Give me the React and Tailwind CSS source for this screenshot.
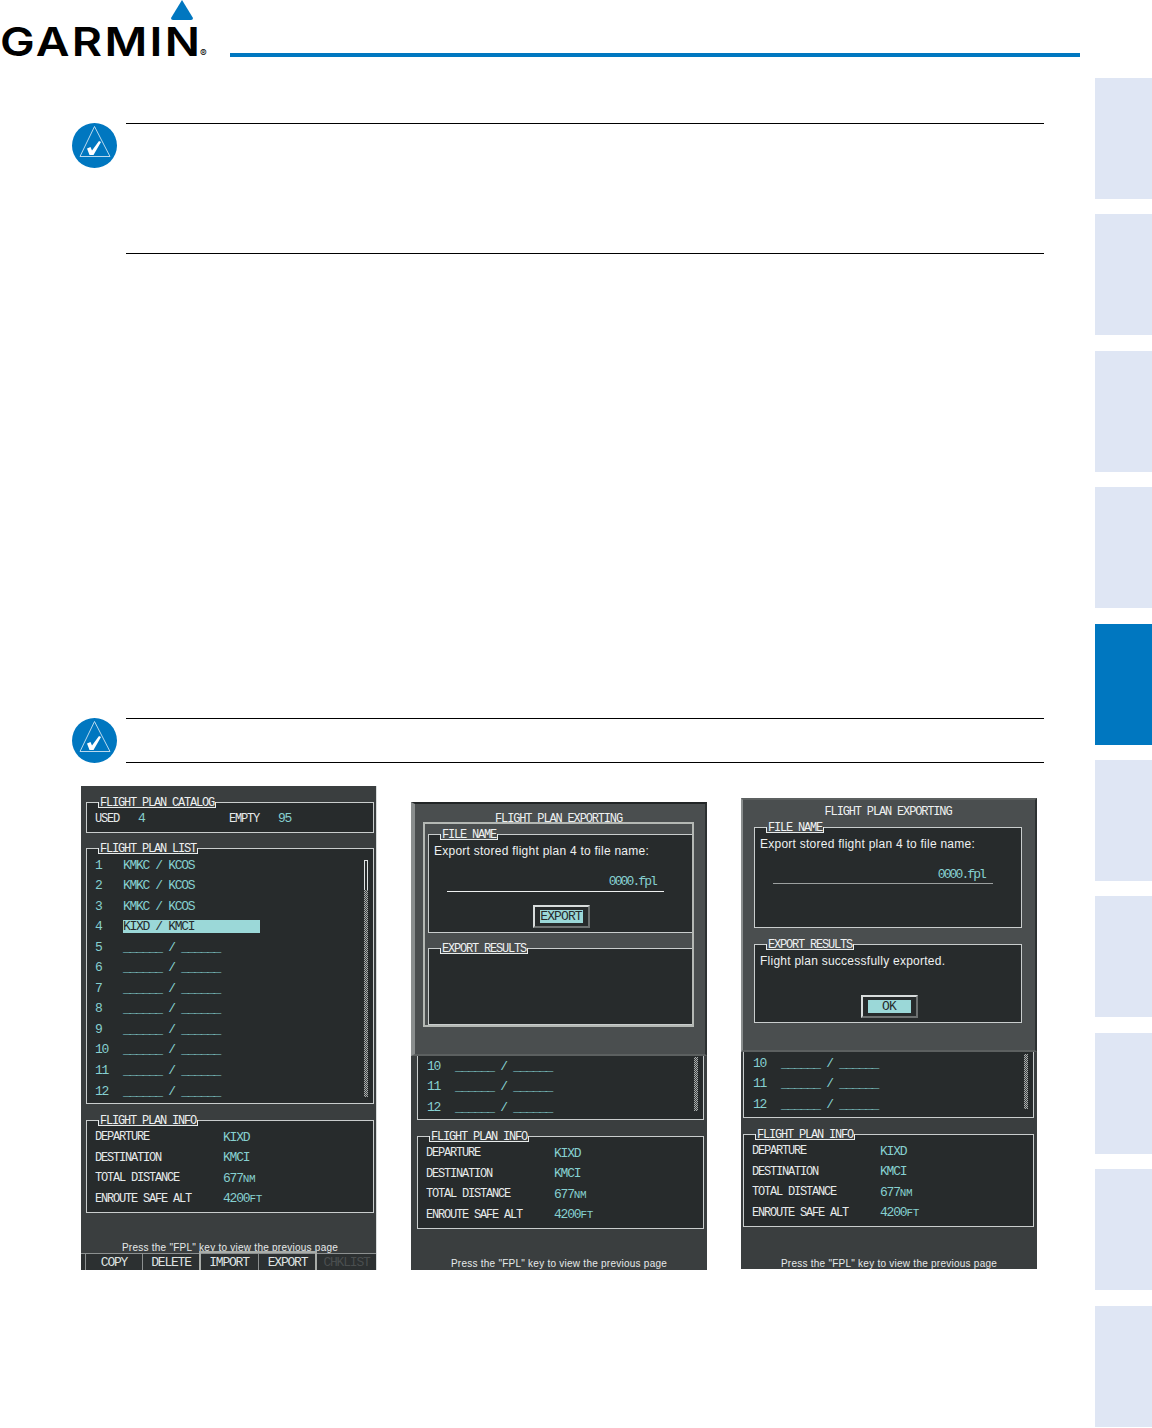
import React from "react";

const TABS = [false, false, false, false, true, false, false, false, false, false];

const ROUTES = [
  ["1", "KMKC / KCOS"],
  ["2", "KMKC / KCOS"],
  ["3", "KMKC / KCOS"],
  ["4", "KIXD / KMCI"],
  ["5", "______ / ______"],
  ["6", "______ / ______"],
  ["7", "______ / ______"],
  ["8", "______ / ______"],
  ["9", "______ / ______"],
  ["10", "______ / ______"],
  ["11", "______ / ______"],
  ["12", "______ / ______"],
];

const INFO = [
  ["DEPARTURE", "KIXD", ""],
  ["DESTINATION", "KMCI", ""],
  ["TOTAL DISTANCE", "677", "NM"],
  ["ENROUTE SAFE ALT", "4200", "FT"],
];

const NoteIcon = () => (
  <svg width="45" height="45" viewBox="0 0 45 45" className="shrink-0">
    <circle cx="22.5" cy="22.5" r="22.5" fill="#0077c0" />
    <path d="M22.5 3.5 L38 33.5 L8 33.5 Z" fill="none" stroke="#cfe4f3" strokeWidth="0.9" />
    <path d="M15 25.5 L18.5 24 L20 27.5 L27 18 L29 19 L21.5 32 L17.5 32 Z" fill="#ffffff" />
  </svg>
);

const Note = ({ height }) => (
  <div className="flex gap-[9px] pl-[72px]">
    <NoteIcon />
    <div className={`w-[918px] border-y border-black ${height}`}></div>
  </div>
);

const Box = ({ title, titleBg = "bg-[#3a3e3f]", className = "", children }) => (
  <div className={`relative border border-[#c9cdcd] bg-[#272b2c] ${className}`}>
    {title && (
      <div className={`absolute left-[11px] -top-px h-[6px] border-x border-b border-[#e8ecec] px-[1px] ${titleBg}`}>
        <div className="-mt-[4px] whitespace-nowrap text-[12px] leading-[11px] tracking-[-1.2px] text-[#eef1f1]">{title}</div>
      </div>
    )}
    {children}
  </div>
);

const RouteRow = ({ num, route, selected }) => (
  <div className="flex h-[20.55px] items-center text-[13px] tracking-[-1.33px] text-[#86d0d0]">
    <span className="w-[28px]">{num}</span>
    {selected ? (
      <span className="w-[137px] bg-[#9bd8d8] leading-[13px] text-[#272b2c]">{route}</span>
    ) : (
      <span>{route}</span>
    )}
  </div>
);

const ScrollTrack = ({ className, thumb }) => (
  <div className={`flex w-[4px] flex-col ${className}`}>
    {thumb && <div className="h-[30px] border-x border-t border-[#dfe3e3]"></div>}
    <div className="flex-1 bg-[repeating-conic-gradient(#a8acac_0_25%,#3a3e3f_0_50%)] bg-size-[2px_2px]"></div>
  </div>
);

const InfoBox = ({ className }) => (
  <Box title="FLIGHT PLAN INFO" className={`h-[93px] pl-[8px] pt-[6px] ${className}`}>
    {INFO.map(([label, value, unit]) => (
      <div key={label} className="flex h-[20.5px] items-center">
        <span className="w-[128px] text-[12px] tracking-[-1.2px] text-[#e6eaea]">{label}</span>
        <span className="text-[13px] tracking-[-1.2px] text-[#86d0d0]">
          {value}
          <span className="text-[11px] tracking-[-0.3px]">{unit}</span>
        </span>
      </div>
    ))}
  </Box>
);

const Footer = ({ className }) => (
  <div className={`text-center font-['Liberation_Sans',sans-serif] text-[10px] leading-[12px] tracking-[0.25px] whitespace-nowrap text-[#e6eaea] ${className}`}>
    Press the "FPL" key to view the previous page
  </div>
);

const Message = ({ children }) => (
  <div className="font-['Liberation_Sans',sans-serif] text-[12px] leading-[14px] tracking-[0.25px] text-[#eef1f1]">{children}</div>
);

const DialogButton = ({ label }) => (
  <div className="mx-auto flex h-[23px] w-[57px] items-center justify-center border-2 border-t-[#d8dcdc] border-l-[#d8dcdc] border-r-[#6c7070] border-b-[#6c7070]">
    <span className="w-[43px] bg-[#9bd8d8] text-center text-[13px] leading-[13px] tracking-[-0.9px] text-[#272b2c]">{label}</span>
  </div>
);

const TailRows = ({ className }) => (
  <div className={`flex justify-between border-x border-b border-[#c9cdcd] bg-[#272b2c] pl-[9px] pr-[5px] ${className}`}>
    <div>
      {ROUTES.slice(9).map(([n, r]) => (
        <RouteRow key={n} num={n} route={r} />
      ))}
    </div>
    <ScrollTrack className="mb-[8px] mt-[1px]" />
  </div>
);

const ListPanel = () => (
  <div className="relative h-[484px] w-[296px] overflow-hidden border-r border-[#d8dcdc] bg-[#3a3e3f] pl-[5px] pr-[2px] pt-[16px]">
    <Box title="FLIGHT PLAN CATALOG" className="flex h-[31px] items-center pl-[8px] pt-[2px]">
      <span className="w-[43px] text-[12px] tracking-[-1.2px] text-[#e6eaea]">USED</span>
      <span className="w-[91px] text-[13px] tracking-[-1.2px] text-[#86d0d0]">4</span>
      <span className="w-[49px] text-[12px] tracking-[-1.2px] text-[#e6eaea]">EMPTY</span>
      <span className="text-[13px] tracking-[-1.2px] text-[#86d0d0]">95</span>
    </Box>
    <Box title="FLIGHT PLAN LIST" className="mt-[15px] flex h-[256px] justify-between pb-[6px] pl-[8px] pr-[5px] pt-[6px]">
      <div>
        {ROUTES.map(([n, r]) => (
          <RouteRow key={n} num={n} route={r} selected={n === "4"} />
        ))}
      </div>
      <ScrollTrack className="mt-[5px]" thumb />
    </Box>
    <InfoBox className="mt-[16px]" />
    <Footer className="mt-[29px]" />
    <div className="absolute inset-x-0 bottom-0 flex h-[17px] border-t border-[#8c9090] bg-[#2c3031] text-center text-[13px] leading-[17px] tracking-[-1.2px] text-[#dfe3e3]">
      <div className="ml-[4px] w-[58px] border-x border-[#8c9090]">COPY</div>
      <div className="w-[56px]">DELETE</div>
      <div className="w-[60px] border-x border-[#8c9090]">IMPORT</div>
      <div className="w-[58px] border-r border-[#8c9090]">EXPORT</div>
      <div className="flex-1 text-[#4a4e4f]">CHKLIST</div>
    </div>
    <div className="absolute bottom-0 left-[118px] h-[19px] w-[118px] border-2 border-b-0 border-[#a8aca8]"></div>
  </div>
);

const ExportingPanel = () => (
  <div className="h-[468px] w-[296px] overflow-hidden bg-[#3a3e3f]">
    <div className="h-[254px] border-t-2 border-r-2 border-b-2 border-l-4 border-t-[#222526] border-r-[#2c3031] border-b-[#5c6060] border-l-[#8a8e8e] bg-[#4a4e4f] pl-[8px] pr-[11px] pt-[9px]">
      <div className="h-[9px] text-center text-[12px] leading-[12px] tracking-[-1.16px] text-[#eef1f1]">FLIGHT PLAN EXPORTING</div>
      <div className="h-[205px] border-2 border-[#b4b8b4] pl-[3px] pt-[10px]">
        <Box title="FILE NAME" titleBg="bg-[#4a4e4f]" className="h-[99px] border-r-0 pl-[5px] pt-[9px]">
          <Message>Export stored flight plan 4 to file name:</Message>
          <div className="ml-[13px] mr-[28px] mt-[16px] border-b border-[#eef1f1] pb-[1px] pr-[8px] text-right text-[13px] leading-[16px] tracking-[-1.9px] text-[#86d0d0]">0000.fpl</div>
          <div className="ml-[-4px] mt-[13px]">
            <DialogButton label="EXPORT" />
          </div>
        </Box>
        <Box title="EXPORT RESULTS" titleBg="bg-[#4a4e4f]" className="mt-[15px] h-[77px] border-r-0" />
      </div>
    </div>
    <TailRows className="ml-[6px] mr-[3px] h-[64px]" />
    <InfoBox className="ml-[6px] mr-[3px] mt-[16px]" />
    <Footer className="mt-[29px]" />
  </div>
);

const ExportedPanel = () => (
  <div className="h-[471px] w-[296px] overflow-hidden bg-[#3a3e3f]">
    <div className="h-[254px] border-t-2 border-r-2 border-b-2 border-l-2 border-t-[#5c6060] border-r-[#2c3031] border-b-[#5c6060] border-l-[#8a8e8e] bg-[#4a4e4f] pl-[11px] pr-[13px] pt-[6px]">
      <div className="h-[21px] text-center text-[12px] leading-[12px] tracking-[-1.16px] text-[#eef1f1]">FLIGHT PLAN EXPORTING</div>
      <Box title="FILE NAME" titleBg="bg-[#4a4e4f]" className="h-[101px] pl-[5px] pt-[9px]">
        <Message>Export stored flight plan 4 to file name:</Message>
        <div className="ml-[13px] mr-[28px] mt-[16px] border-b border-[#9ca0a0] pr-[8px] text-right text-[13px] leading-[16px] tracking-[-1.9px] text-[#86d0d0]">0000.fpl</div>
      </Box>
      <Box title="EXPORT RESULTS" titleBg="bg-[#4a4e4f]" className="mt-[16px] h-[79px] pl-[5px] pt-[9px]">
        <Message>Flight plan successfully exported.</Message>
        <div className="ml-[-3px] mt-[27px]">
          <DialogButton label="OK" />
        </div>
      </Box>
    </div>
    <TailRows className="ml-[2px] mr-[3px] h-[66px] pt-[1px]" />
    <InfoBox className="ml-[2px] mr-[3px] mt-[16px]" />
    <Footer className="mt-[31px]" />
  </div>
);

const App = () => (
  <div className="flex h-[1428px] w-[1152px] overflow-hidden bg-white font-['Liberation_Mono',monospace]">
    <div className="w-[1095px]">
      <div className="flex h-[60px]">
        <div className="relative w-[230px]">
          <svg width="22" height="21" viewBox="0 0 22 21" className="absolute left-[171px] top-0">
            <path d="M11 0 L22 18 Q22 20 20 20 L2 20 Q0 20 0 18 Z" fill="#0077c0" />
          </svg>
          <span className="absolute left-0 top-[20px] origin-left scale-x-[1.16] whitespace-nowrap font-['Inter',sans-serif] text-[40px] font-semibold leading-[43px] tracking-[2px] text-black">GARMIN</span>
          <span className="absolute left-[200px] top-[48px] font-['Inter',sans-serif] text-[10px] leading-[10px] text-black">®</span>
        </div>
        <div className="mr-[15px] mt-[53px] h-[4px] flex-1 bg-[#0077c0]"></div>
      </div>
      <div className="mt-[63px]">
        <Note height="h-[131px]" />
      </div>
      <div className="mt-[464px]">
        <Note height="h-[45px]" />
      </div>
      <div className="mt-[23px] flex items-end gap-[34px] pl-[81px]">
        <ListPanel />
        <ExportingPanel />
        <div className="-translate-y-px">
          <ExportedPanel />
        </div>
      </div>
    </div>
    <div className="flex w-[57px] flex-col gap-[15.4px] pt-[78px]">
      {TABS.map((active, i) => (
        <div key={i} className={`h-[121px] ${active ? "bg-[#0077c0]" : "bg-[#dfe6f4]"}`}></div>
      ))}
    </div>
  </div>
);

export default App;
